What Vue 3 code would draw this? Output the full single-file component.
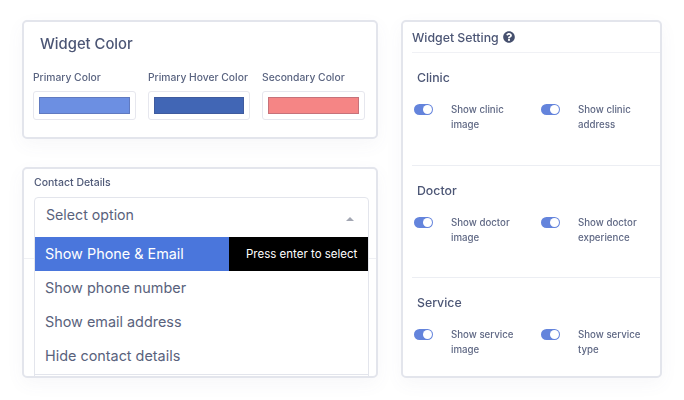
<script setup>
const swatches = [
  { label: 'Primary Color', color: '#6c8fe2' },
  { label: 'Primary Hover Color', color: '#4166b5' },
  { label: 'Secondary Color', color: '#f58585' }
]
const options = ['Show phone number', 'Show email address', 'Hide contact details']
const sections = [
  { title: 'Clinic', items: [['Show clinic', 'image'], ['Show clinic', 'address']] },
  { title: 'Doctor', items: [['Show doctor', 'image'], ['Show doctor', 'experience']] },
  { title: 'Service', items: [['Show service', 'image'], ['Show service', 'type']] }
]
</script>

<template>
  <div class="page">
    <div class="left">
      <section class="card color-card">
        <h2 class="color-title">Widget Color</h2>
        <div class="swatches">
          <div v-for="s in swatches" :key="s.label" class="swatch">
            <div class="swatch-label">{{ s.label }}</div>
            <div class="swatch-box"><div class="swatch-fill" :style="{ background: s.color }"></div></div>
          </div>
        </div>
      </section>

      <section class="card contact-card">
        <div class="contact-label">Contact Details</div>
        <div class="behind-line"></div>
        <div class="select">
          <div class="select-head">
            <span>Select option</span>
            <span class="caret"></span>
          </div>
          <div class="option active">
            <span class="active-text">Show Phone &amp; Email</span>
            <span class="hint">Press enter to select</span>
          </div>
          <div v-for="o in options" :key="o" class="option">{{ o }}</div>
          <div class="list-end"></div>
        </div>
      </section>
    </div>

    <section class="card settings">
      <header class="settings-head">
        <span>Widget Setting</span>
        <svg class="help" viewBox="0 0 512 512" width="12" height="12">
          <path fill="#46506e" d="M504 256c0 137-111 248-248 248S8 393 8 256 119 8 256 8s248 111 248 248zM263 90c-55 0-90 23-117 64-4 5-3 12 3 16l35 26c5 4 13 3 17-2 18-23 30-36 57-36 20 0 45 13 45 32 0 15-12 22-32 33-23 13-54 29-54 70v4c0 7 5 12 12 12h56c7 0 12-5 12-12v-1c0-29 83-30 83-106 0-57-60-100-117-100zm-7 244a46 46 0 1 0 0 92 46 46 0 0 0 0-92z"/>
        </svg>
      </header>
      <div v-for="sec in sections" :key="sec.title" class="group">
        <h3 class="group-title">{{ sec.title }}</h3>
        <div class="toggles">
          <div v-for="it in sec.items" :key="it[0] + it[1]" class="toggle-row">
            <span class="toggle"><span class="knob"></span></span>
            <span class="toggle-text">{{ it[0] }}<br />{{ it[1] }}</span>
          </div>
        </div>
      </div>
    </section>
  </div>
</template>

<style>
html, body { margin: 0; background: #fff; }
</style>

<style scoped>
.page {
  width: 684px;
  height: 400px;
  box-sizing: border-box;
  padding: 20px 0 0 22px;
  display: flex;
  gap: 23px;
  overflow: hidden;
  font-family: Inter, "Liberation Sans", sans-serif;
  color: #4a5470;
  filter: blur(0.45px);
}
.left {
  width: 356px;
  display: flex;
  flex-direction: column;
  gap: 28px;
}
.card {
  box-sizing: border-box;
  background: #fff;
  border: 2px solid #e3e5ec;
  border-radius: 5px;
  box-shadow: 0 6px 18px rgba(90, 100, 140, 0.05);
}
.color-card {
  height: 119px;
  padding: 13px 9px 0;
}
.color-title {
  margin: 0 0 0 7px;
  font-size: 14.8px;
  line-height: 18px;
  font-weight: 500;
  color: #4c5675;
}
.swatches {
  margin-top: 17px;
  display: grid;
  grid-template-columns: 103px 102px 103px;
  column-gap: 12px;
}
.swatch-label {
  font-size: 10.3px;
  line-height: 14px;
  font-weight: 500;
  color: #5a6480;
  white-space: nowrap;
}
.swatch-box {
  margin-top: 7px;
  box-sizing: border-box;
  height: 29px;
  padding: 5px;
  border: 1px solid #e6e7ee;
  border-radius: 3px;
}
.swatch-fill {
  height: 100%;
  box-sizing: border-box;
  border: 1px solid rgba(60, 60, 90, 0.25);
}
.contact-card {
  position: relative;
  height: 211px;
  padding: 7px 9px 0;
  overflow: hidden;
}
.contact-label {
  margin-left: 1px;
  font-size: 10.5px;
  line-height: 14px;
  font-weight: 500;
  color: #505a78;
}
.behind-line {
  position: absolute;
  left: 0;
  right: 0;
  top: 89px;
  height: 1px;
  background: #eff0f4;
}
.select {
  position: absolute;
  left: 10px;
  top: 28px;
  width: 335px;
  height: 183px;
  box-sizing: border-box;
  border: 1px solid #e3e5ec;
  border-radius: 4px;
  background: #fff;
  color: #59627c;
}
.select-head {
  height: 39px;
  box-sizing: border-box;
  padding: 0 14px 0 11px;
  display: flex;
  justify-content: space-between;
  align-items: center;
  font-size: 14.2px;
}
.select-head span:first-child { margin-top: -7px; }
.caret {
  width: 0;
  height: 0;
  border-left: 4px solid transparent;
  border-right: 4px solid transparent;
  border-bottom: 4px solid #a3a7b3;
  margin-top: 2px;
}
.option {
  height: 34px;
  box-sizing: border-box;
  padding: 0 0 1px 10px;
  display: flex;
  align-items: center;
  font-size: 14.4px;
  white-space: nowrap;
}
.option.active {
  padding: 0;
  color: #fff;
  align-items: stretch;
}
.active-text {
  flex: 1;
  padding: 0 0 2px 10px;
  background: #4a76dc;
  display: flex;
  align-items: center;
}
.hint {
  width: 139px;
  padding-left: 17px;
  box-sizing: border-box;
  background: #000;
  font-size: 11.5px;
  display: flex;
  align-items: center;
}
.list-end {
  height: 1px;
  margin-top: 1px;
  background: #e3e5ec;
}
.settings {
  width: 261px;
  height: 358px;
  padding: 0 0 0 9px;
}
.settings-head {
  height: 30px;
  border-bottom: 1px solid #f0f1f5;
  display: flex;
  align-items: center;
  gap: 4px;
  font-size: 12.3px;
  font-weight: 500;
  color: #4c5675;
}
.group {
  height: 112.5px;
  box-sizing: border-box;
  border-bottom: 1px solid #eceef3;
  padding: 17px 0 0 5px;
}
.group:last-child { border-bottom: 0; }
.group-title {
  margin: 0;
  font-size: 12.3px;
  line-height: 16px;
  font-weight: 500;
  color: #4c5675;
}
.toggles {
  margin: 16px 0 0 -3px;
  display: grid;
  grid-template-columns: 127px 1fr;
}
.toggle-row {
  display: flex;
  gap: 18px;
}
.toggle {
  flex: none;
  width: 19px;
  height: 11px;
  margin-top: 2px;
  border-radius: 6px;
  background: #6484dc;
  position: relative;
}
.knob {
  position: absolute;
  right: 1px;
  top: 1px;
  width: 9px;
  height: 9px;
  border-radius: 50%;
  background: #fff;
}
.toggle-text {
  font-size: 9.7px;
  line-height: 15.3px;
  font-weight: 500;
  color: #5f6884;
  white-space: nowrap;
}
</style>
